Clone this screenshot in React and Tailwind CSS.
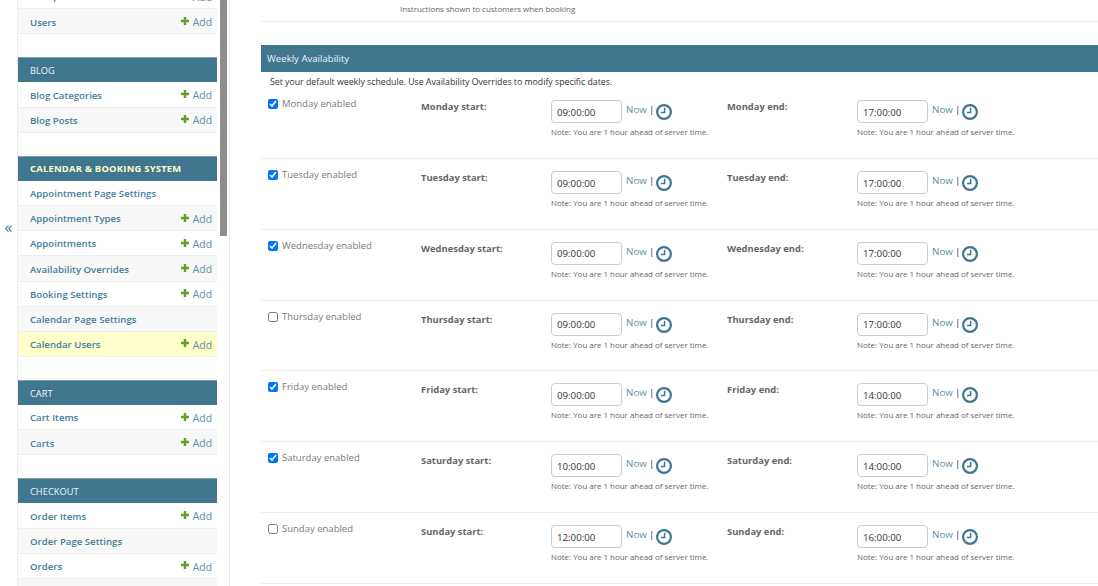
function Plus() {
  return (
    <svg width="8" height="8" viewBox="0 0 9 9" className="block">
      <path d="M3.1 0h2.8v3.1H9v2.8H5.9V9H3.1V5.9H0V3.1h3.1z" fill="#5fa225" />
    </svg>
  );
}

function Clock() {
  return (
    <svg width="16" height="16" viewBox="0 0 16 16" className="block">
      <circle cx="8" cy="8" r="6.9" fill="#fff" stroke="#417690" strokeWidth="2.2" />
      <path d="M8.6 3.8v4.8H5" fill="none" stroke="#417690" strokeWidth="1.5" />
    </svg>
  );
}

function Row({ name, add = true, alt, hl }) {
  return (
    <div className={`flex h-[25.2px] items-center justify-between border-b border-[#eeeeee] pl-[12px] pr-[5px] pt-[3px] text-[9.65px] ${hl ? "bg-[#ffffcc]" : alt ? "bg-[#f8f8f8]" : "bg-white"}`}>
      <span className="font-semibold text-[#447e9b]">{name}</span>
      {add && (
        <span className="flex items-center gap-[4px] text-[10.4px] text-[#5b8fa8]">
          <span className="-mt-[4px]"><Plus /></span>
          Add
        </span>
      )}
    </div>
  );
}

function Section({ title, strong, rows }) {
  return (
    <div className="mb-[23px]">
      <div className={`flex h-[25px] items-center border-t border-[#7fa0b2] bg-[#417690] pl-[12px] pt-[1px] ${strong ? "text-[9.4px] font-bold tracking-[0.25px] text-[#ffffcc]" : "text-[9.3px] text-[#f0f4f6]"}`}>
        {title}
      </div>
      {rows.map((r, i) => (
        <Row key={r.name} {...r} alt={i % 2 === 1} />
      ))}
    </div>
  );
}

function TimeField({ value }) {
  return (
    <div className="w-[164px]">
      <div className="flex items-start">
        <div className="flex h-[23px] w-[71px] items-center rounded-[4px] border border-[#cccccc] bg-white pl-[5px] pt-[3px] text-[9.7px] text-[#333333]">
          {value}
        </div>
        <a className="ml-[4px] mt-[3px] text-[9.8px] text-[#5b8fa8]">Now</a>
        <span className="ml-[2px] mt-[3px] text-[9.8px] text-[#333333]">|</span>
        <span className="ml-[2px] mt-[4px]"><Clock /></span>
      </div>
      <div className="mt-[4px] whitespace-nowrap text-[7.95px] text-[#666666]">Note: You are 1 hour ahead of server time.</div>
    </div>
  );
}

function Day({ day, on, start, end }) {
  return (
    <div className="flex h-[70.85px] border-b border-[#eeeeee] pl-[7px]">
      <div className="flex w-[153px] items-start pt-[9px]">
        <input type="checkbox" defaultChecked={on} className="ml-0 mr-[4px] mt-[2px] h-[10px] w-[10px] accent-[#0075ff]" />
        <span className="text-[9.5px] text-[#7a7a7a]">{day} enabled</span>
      </div>
      <div className="w-[130px] pt-[12px] text-[9.4px] font-bold text-[#666666]">{day} start:</div>
      <div className="w-[176px] pt-[12px]"><TimeField value={start} /></div>
      <div className="w-[130px] pt-[12px] text-[9.4px] font-bold text-[#666666]">{day} end:</div>
      <div className="pt-[12px]"><TimeField value={end} /></div>
    </div>
  );
}

const days = [
  ["Monday", true, "09:00:00", "17:00:00"],
  ["Tuesday", true, "09:00:00", "17:00:00"],
  ["Wednesday", true, "09:00:00", "17:00:00"],
  ["Thursday", false, "09:00:00", "17:00:00"],
  ["Friday", true, "09:00:00", "14:00:00"],
  ["Saturday", true, "10:00:00", "14:00:00"],
  ["Sunday", false, "12:00:00", "16:00:00"],
];

export default function App() {
  return (
    <div className="flex h-[586px] w-[1098px] overflow-hidden bg-white font-['Open_Sans',sans-serif]">
      <div className="w-[17px] shrink-0 pt-[217px] text-center text-[16px] leading-[20px] text-[#447e9b]">«</div>
      <div className="flex w-[213px] shrink-0 border-r border-[#eaeaea]">
        <div className="w-[200px] shrink-0 border-l border-[#eeeeee] -mt-[16px]">
          <div className="mb-[23px]">
            <Row name="Groups" />
            <Row name="Users" alt />
          </div>
          <Section title="BLOG" rows={[{ name: "Blog Categories" }, { name: "Blog Posts" }]} />
          <Section title="CALENDAR & BOOKING SYSTEM" strong rows={[
            { name: "Appointment Page Settings", add: false },
            { name: "Appointment Types" },
            { name: "Appointments" },
            { name: "Availability Overrides" },
            { name: "Booking Settings" },
            { name: "Calendar Page Settings", add: false },
            { name: "Calendar Users", hl: true },
          ]} />
          <Section title="CART" rows={[{ name: "Cart Items" }, { name: "Carts" }]} />
          <Section title="CHECKOUT" rows={[
            { name: "Order Items" },
            { name: "Order Page Settings", add: false },
            { name: "Orders" },
            { name: "Payments" },
          ]} />
        </div>
        <div className="ml-[3px] h-[236px] w-[7px] bg-[#8d8d8d]" />
      </div>
      <div className="ml-[31px] min-w-0 flex-1">
        <div className="h-[22px] border-b border-[#eeeeee] pl-[139px] pt-[4px] text-[7.95px] text-[#666666]">Instructions shown to customers when booking</div>
        <div className="mt-[23px] flex h-[27px] items-center bg-[#417690] pl-[6px] pt-[2px] text-[9.6px] text-[#f0f4f6]">Weekly Availability</div>
        <div className="pl-[9px] pt-[4px] text-[8.75px] leading-[12px] text-[#333333]">Set your default weekly schedule. Use Availability Overrides to modify specific dates.</div>
        <div>
          {days.map(([d, on, s, e]) => (
            <Day key={d} day={d} on={on} start={s} end={e} />
          ))}
        </div>
      </div>
    </div>
  );
}
